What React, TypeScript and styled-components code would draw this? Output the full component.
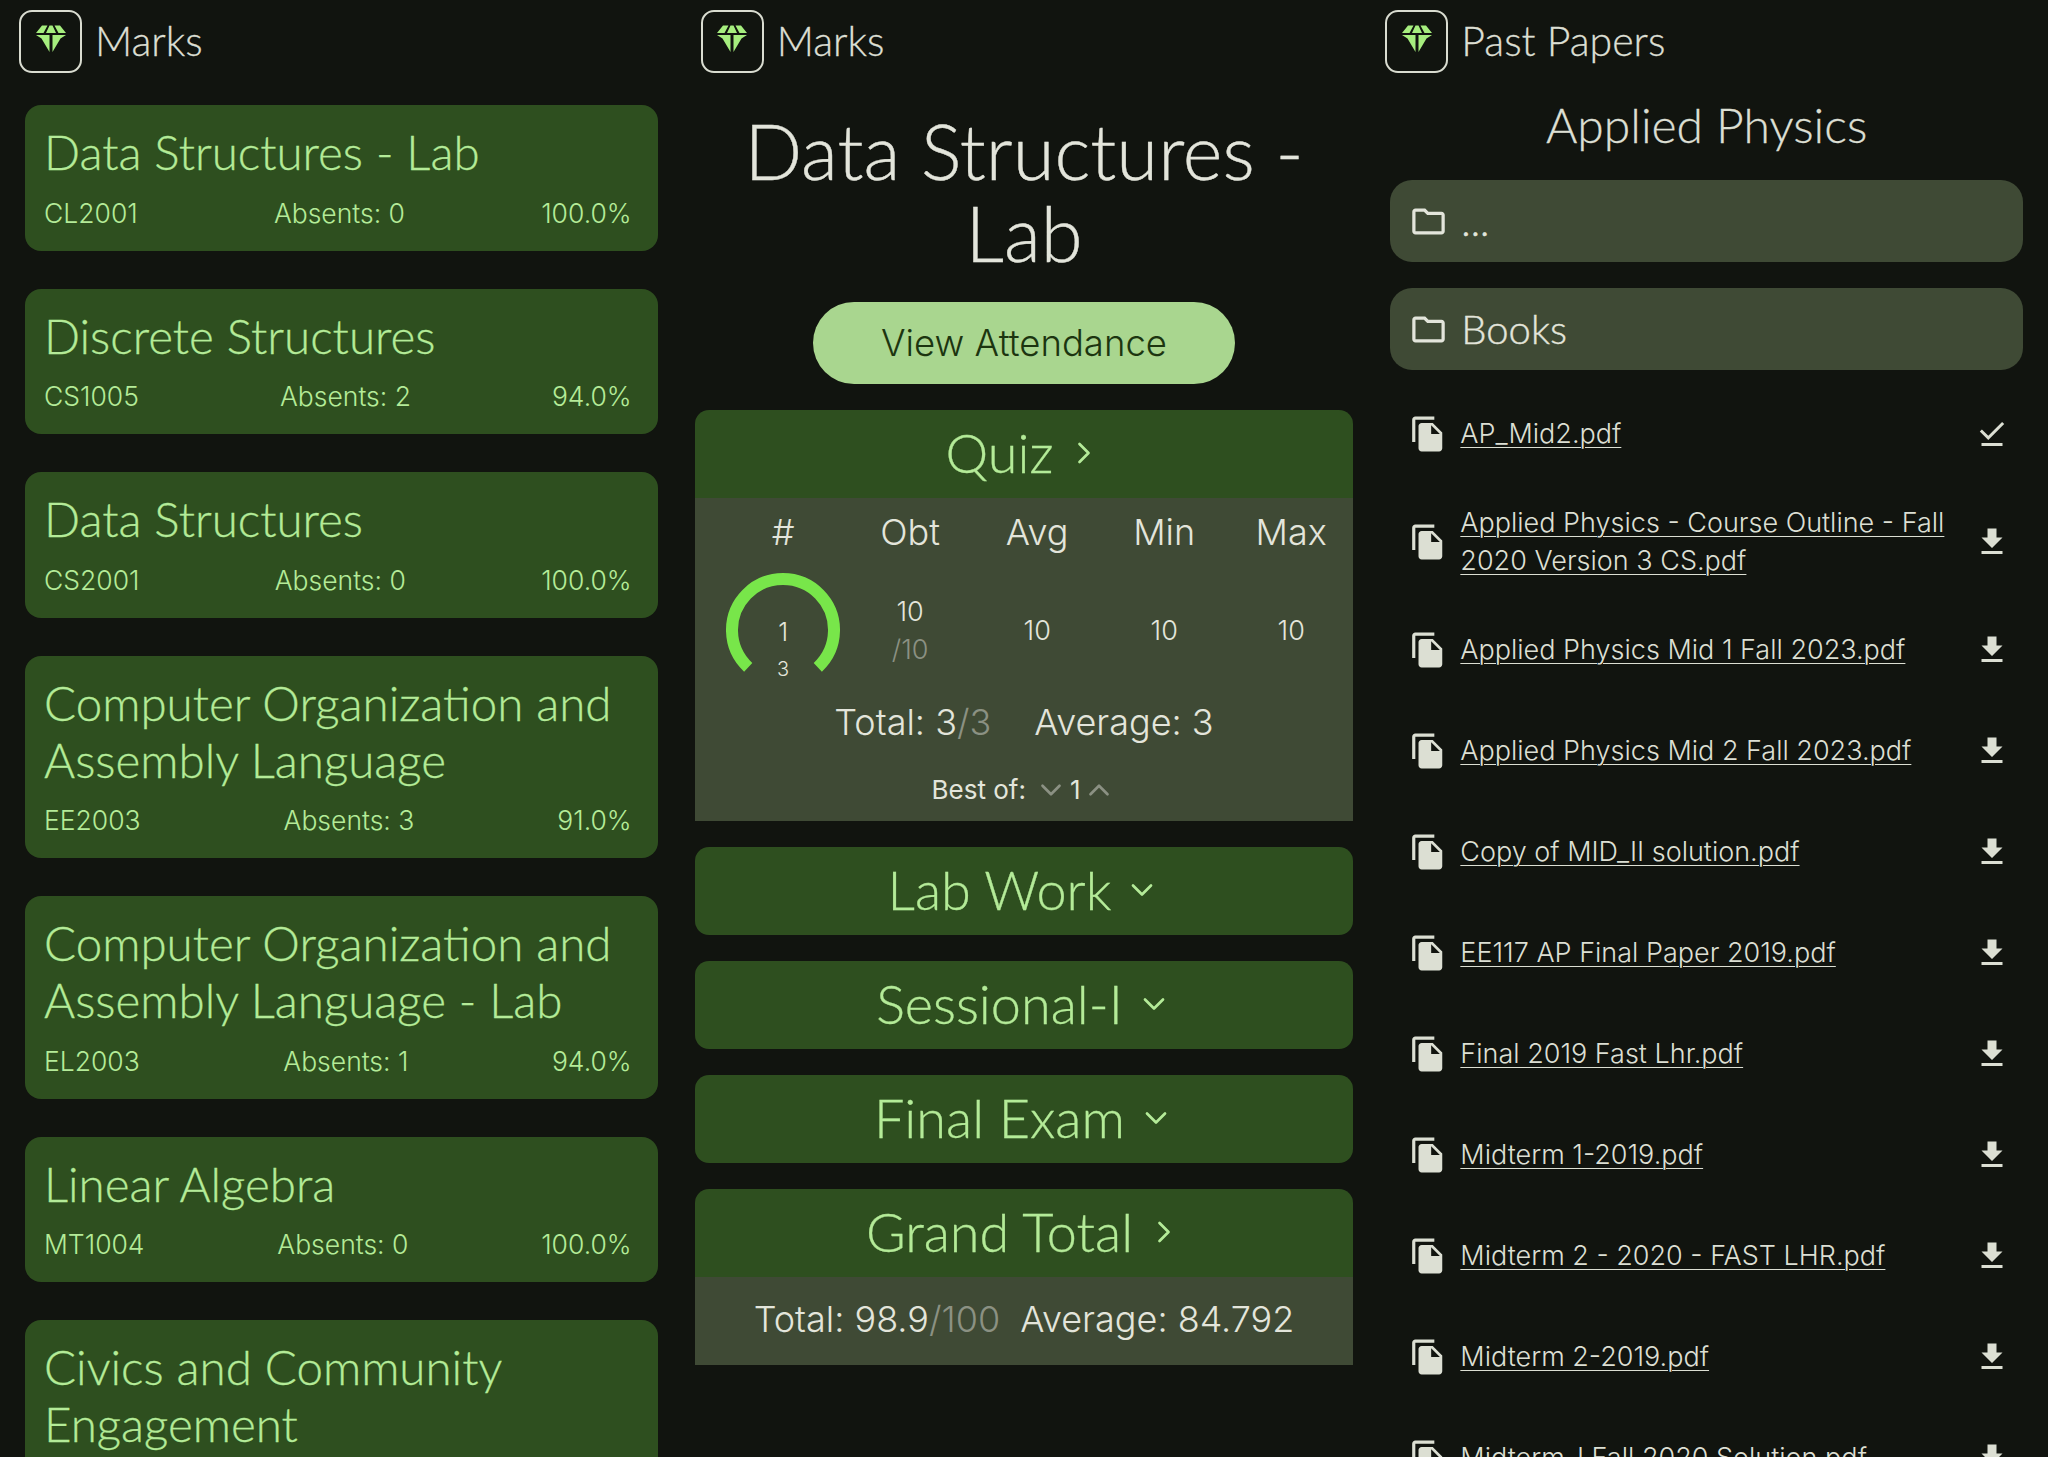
import styled, { createGlobalStyle } from 'styled-components';
import { MdDownloadDone, MdFileCopy, MdFileDownload, MdOutlineFolder } from 'react-icons/md';
import { LuChevronDown, LuChevronRight, LuChevronUp } from 'react-icons/lu';

const GlobalStyle = createGlobalStyle`
  html, body {
    margin: 0;
    padding: 0;
    background: #11140f;
  }
  * { box-sizing: border-box; }
`;

const heading = `'Lato', sans-serif`;
const body = `'Inter', sans-serif`;

const Page = styled.div`
  display: grid;
  grid-template-columns: repeat(3, 1fr);
  width: 2048px;
  height: 1457px;
  overflow: hidden;
  background: #11140f;
`;

const Column = styled.div<{ $pad: number }>`
  display: flex;
  flex-direction: column;
  height: 1457px;
  overflow: hidden;
  padding: 0 ${(p) => p.$pad}px;
`;

const TopBar = styled.div<{ $inset: number }>`
  display: flex;
  align-items: center;
  gap: 13px;
  height: 62px;
  margin: 10px 0 0 ${(p) => p.$inset}px;
  flex-shrink: 0;
`;

const LogoBox = styled.div`
  display: flex;
  align-items: center;
  justify-content: center;
  width: 63px;
  height: 63px;
  border: 2px solid #d9dcd0;
  border-radius: 13px;
  padding-bottom: 4px;
`;

const TopTitle = styled.span`
  padding-bottom: 2px;
  font-family: ${heading};
  font-weight: 300;
  font-size: 41px;
  -webkit-text-stroke: 0.3px currentColor;
  color: #dcdfd3;
`;

const CourseList = styled.div`
  display: flex;
  flex-direction: column;
  gap: 38px;
  margin-top: 33px;
`;

const CourseCard = styled.div`
  background: #2e4f1f;
  border-radius: 16px;
  padding: 18px 26px 22px 19px;
  flex-shrink: 0;
`;

const CourseName = styled.div`
  font-family: ${heading};
  font-weight: 300;
  font-size: 47.5px;
  line-height: 57px;
  -webkit-text-stroke: 0.3px currentColor;
  color: #b4eb98;
`;

const CourseMeta = styled.div`
  display: flex;
  justify-content: space-between;
  margin-top: 16.5px;
  font-family: ${body};
  font-weight: 300;
  font-size: 26.5px;
  line-height: 32px;
  color: #b4eb98;
`;

const DetailTitle = styled.h1`
  margin: 38px 0 0;
  font-family: ${heading};
  font-weight: 300;
  font-size: 76px;
  line-height: 82px;
  text-align: center;
  -webkit-text-stroke: 0.4px currentColor;
  color: #e3e5db;
`;

const AttendanceButton = styled.div`
  align-self: center;
  display: flex;
  align-items: center;
  justify-content: center;
  width: 422px;
  height: 82px;
  margin-top: 28px;
  border-radius: 41px;
  background: #a9d68f;
  font-family: ${body};
  font-weight: 300;
  font-size: 36.5px;
  color: #1c3510;
`;

const Sections = styled.div`
  display: flex;
  flex-direction: column;
  gap: 26px;
  margin-top: 26px;
`;

const Section = styled.div`
  border-radius: 14px 14px 0 0;
  overflow: hidden;
`;

const SectionHeader = styled.div<{ $closed?: boolean }>`
  display: flex;
  align-items: center;
  justify-content: center;
  gap: 13px;
  height: 88px;
  padding-bottom: 3px;
  background: #2e4f1f;
  border-radius: ${(p) => (p.$closed ? '0 0 14px 14px' : '0')};
  font-family: ${heading};
  font-weight: 300;
  font-size: 54px;
  -webkit-text-stroke: 0.3px currentColor;
  color: #b4eb98;
`;

const SectionBody = styled.div`
  background: #3f4a35;
  color: #e3e5db;
  font-family: ${body};
  font-weight: 300;
`;

const QuizBody = styled(SectionBody)`
  height: 323px;
  padding: 12px 0 0 25px;
`;

const MarksGrid = styled.div`
  display: grid;
  grid-template-columns: repeat(5, 127px);
  justify-items: center;
  align-items: center;
`;

const GridHead = styled.div`
  height: 44px;
  line-height: 44px;
  font-size: 36px;
`;

const GridCell = styled.div`
  margin-top: 31px;
  font-size: 27px;
  line-height: 38px;
  text-align: center;
`;

const Muted = styled.span`
  display: inline;
  color: #8b9183;
`;

const CellStack = styled.div`
  display: flex;
  flex-direction: column;
`;

const Gauge = styled.div`
  position: relative;
  width: 114px;
  height: 104px;
  margin-top: 19px;
`;

const GaugeValue = styled.span`
  position: absolute;
  left: 0;
  right: 0;
  top: 44px;
  text-align: center;
  font-size: 25px;
  line-height: 30px;
`;

const GaugeMax = styled.span`
  position: absolute;
  left: 0;
  right: 0;
  top: 84px;
  text-align: center;
  font-size: 20px;
  line-height: 24px;
`;

const TotalsRow = styled.div<{ $gap: number }>`
  display: flex;
  justify-content: center;
  gap: ${(p) => p.$gap}px;
  font-size: 36px;
  line-height: 44px;
`;

const QuizTotals = styled(TotalsRow)`
  margin: 23px 0 0 -25px;
`;

const BestOf = styled.div`
  display: flex;
  align-items: center;
  justify-content: center;
  gap: 2px;
  margin: 29px 0 0 -25px;
  font-size: 26px;
  font-weight: 400;
  line-height: 32px;
`;

const BestLabel = styled.span`
  margin-right: 6px;
`;

const ChevronWrap = styled(Muted)`
  display: flex;
`;

const GrandBody = styled(SectionBody)`
  display: flex;
  align-items: center;
  justify-content: center;
  height: 88px;
  padding-bottom: 4px;
`;

const PaperTitle = styled.div`
  margin-top: 24px;
  font-family: ${heading};
  font-weight: 300;
  font-size: 48px;
  line-height: 58px;
  text-align: center;
  -webkit-text-stroke: 0.3px currentColor;
  color: #dcdfd3;
`;

const FolderList = styled.div`
  display: flex;
  flex-direction: column;
  gap: 26px;
  margin-top: 26px;
`;

const FolderRow = styled.div`
  display: flex;
  align-items: center;
  gap: 13px;
  height: 82px;
  padding-left: 19px;
  border-radius: 22px;
  background: #3f4a35;
  font-family: ${heading};
  font-weight: 300;
  font-size: 40px;
  -webkit-text-stroke: 0.4px currentColor;
  color: #e3e5db;
`;

const FileList = styled.div`
  display: flex;
  flex-direction: column;
  margin-top: 13px;
`;

const FileRow = styled.div`
  display: flex;
  align-items: center;
  min-height: 62px;
  padding: 19.5px 0 19.5px 19px;
  box-sizing: content-box;
  color: #dcdfd3;
  flex-shrink: 0;
`;

const FileName = styled.a`
  flex: 1;
  margin-left: 13px;
  font-family: ${body};
  font-weight: 300;
  font-size: 27px;
  line-height: 38px;
  text-decoration: underline;
  text-underline-offset: 4px;
  text-decoration-thickness: 1px;
`;

const ActionSlot = styled.div`
  display: flex;
  justify-content: center;
  width: 44px;
  margin: 0 9px 0 15px;
  flex-shrink: 0;
`;

function Diamond() {
  return (
    <svg width="32" height="28" viewBox="0 0 32 28" fill="#a6ee7e">
      <path d="M7 0.5h5.5L8.5 8H1zM14.5 0.5h3L21 8H11zM19.5 0.5H25L31 8h-7.5zM1 10h13.5v3.5h-8v0zM17.5 10H31l-5.5 3.5h-8zM6.5 13.5h8V27zM17.5 13.5h8L17.5 27z" />
    </svg>
  );
}

function GaugeArc() {
  return (
    <svg width="114" height="104" viewBox="0 0 114 104" fill="none">
      <path d="M22.2 94.3 A 51 51 0 1 1 91.8 94.3" stroke="#78e64a" strokeWidth="12" />
    </svg>
  );
}

const courses = [
  { name: 'Data Structures - Lab', code: 'CL2001', absents: 0, pct: '100.0%' },
  { name: 'Discrete Structures', code: 'CS1005', absents: 2, pct: '94.0%' },
  { name: 'Data Structures', code: 'CS2001', absents: 0, pct: '100.0%' },
  { name: 'Computer Organization and Assembly Language', code: 'EE2003', absents: 3, pct: '91.0%' },
  { name: 'Computer Organization and Assembly Language - Lab', code: 'EL2003', absents: 1, pct: '94.0%' },
  { name: 'Linear Algebra', code: 'MT1004', absents: 0, pct: '100.0%' },
  { name: 'Civics and Community Engagement', code: 'SS1012', absents: 0, pct: '100.0%' },
];

const files = [
  'AP_Mid2.pdf',
  'Applied Physics - Course Outline - Fall 2020 Version 3 CS.pdf',
  'Applied Physics Mid 1 Fall 2023.pdf',
  'Applied Physics Mid 2 Fall 2023.pdf',
  'Copy of MID_II solution.pdf',
  'EE117 AP Final Paper 2019.pdf',
  'Final 2019 Fast Lhr.pdf',
  'Midterm 1-2019.pdf',
  'Midterm 2 - 2020 - FAST LHR.pdf',
  'Midterm 2-2019.pdf',
  'Midterm-I Fall 2020 Solution.pdf',
];

export default function App() {
  return (
    <Page>
      <GlobalStyle />

      <Column $pad={25}>
        <TopBar $inset={-6}>
          <LogoBox><Diamond /></LogoBox>
          <TopTitle>Marks</TopTitle>
        </TopBar>
        <CourseList>
          {courses.map((c) => (
            <CourseCard key={c.code}>
              <CourseName>{c.name}</CourseName>
              <CourseMeta>
                <span>{c.code}</span>
                <span>Absents: {c.absents}</span>
                <span>{c.pct}</span>
              </CourseMeta>
            </CourseCard>
          ))}
        </CourseList>
      </Column>

      <Column $pad={12}>
        <TopBar $inset={6}>
          <LogoBox><Diamond /></LogoBox>
          <TopTitle>Marks</TopTitle>
        </TopBar>
        <DetailTitle>Data Structures -<br />Lab</DetailTitle>
        <AttendanceButton>View Attendance</AttendanceButton>
        <Sections>
          <Section>
            <SectionHeader>Quiz <LuChevronRight size={36} strokeWidth={1.8} /></SectionHeader>
            <QuizBody>
              <MarksGrid>
                <GridHead>#</GridHead>
                <GridHead>Obt</GridHead>
                <GridHead>Avg</GridHead>
                <GridHead>Min</GridHead>
                <GridHead>Max</GridHead>
                <Gauge>
                  <GaugeArc />
                  <GaugeValue>1</GaugeValue>
                  <GaugeMax>3</GaugeMax>
                </Gauge>
                <GridCell>
                  <CellStack>
                    <span>10</span>
                    <Muted>/10</Muted>
                  </CellStack>
                </GridCell>
                <GridCell>10</GridCell>
                <GridCell>10</GridCell>
                <GridCell>10</GridCell>
              </MarksGrid>
              <QuizTotals $gap={43}>
                <span>Total: 3<Muted>/3</Muted></span>
                <span>Average: 3</span>
              </QuizTotals>
              <BestOf>
                <BestLabel>Best of:</BestLabel>
                <ChevronWrap><LuChevronDown size={34} strokeWidth={1.9} /></ChevronWrap>
                <span>1</span>
                <ChevronWrap><LuChevronUp size={34} strokeWidth={1.9} /></ChevronWrap>
              </BestOf>
            </QuizBody>
          </Section>
          <Section><SectionHeader $closed>Lab Work <LuChevronDown size={36} strokeWidth={1.8} /></SectionHeader></Section>
          <Section><SectionHeader $closed>Sessional-I <LuChevronDown size={36} strokeWidth={1.8} /></SectionHeader></Section>
          <Section><SectionHeader $closed>Final Exam <LuChevronDown size={36} strokeWidth={1.8} /></SectionHeader></Section>
          <Section>
            <SectionHeader>Grand Total <LuChevronRight size={36} strokeWidth={1.8} /></SectionHeader>
            <GrandBody>
              <TotalsRow $gap={20}>
                <span>Total: 98.9<Muted>/100</Muted></span>
                <span>Average: 84.792</span>
              </TotalsRow>
            </GrandBody>
          </Section>
        </Sections>
      </Column>

      <Column $pad={25}>
        <TopBar $inset={-5}>
          <LogoBox><Diamond /></LogoBox>
          <TopTitle>Past Papers</TopTitle>
        </TopBar>
        <PaperTitle>Applied Physics</PaperTitle>
        <FolderList>
          <FolderRow><MdOutlineFolder size={39} />...</FolderRow>
          <FolderRow><MdOutlineFolder size={39} />Books</FolderRow>
        </FolderList>
        <FileList>
          {files.map((f, i) => (
            <FileRow key={f}>
              <MdFileCopy size={38} />
              <FileName>{f}</FileName>
              <ActionSlot>
                {i === 0 ? <MdDownloadDone size={36} /> : <MdFileDownload size={36} />}
              </ActionSlot>
            </FileRow>
          ))}
        </FileList>
      </Column>
    </Page>
  );
}
